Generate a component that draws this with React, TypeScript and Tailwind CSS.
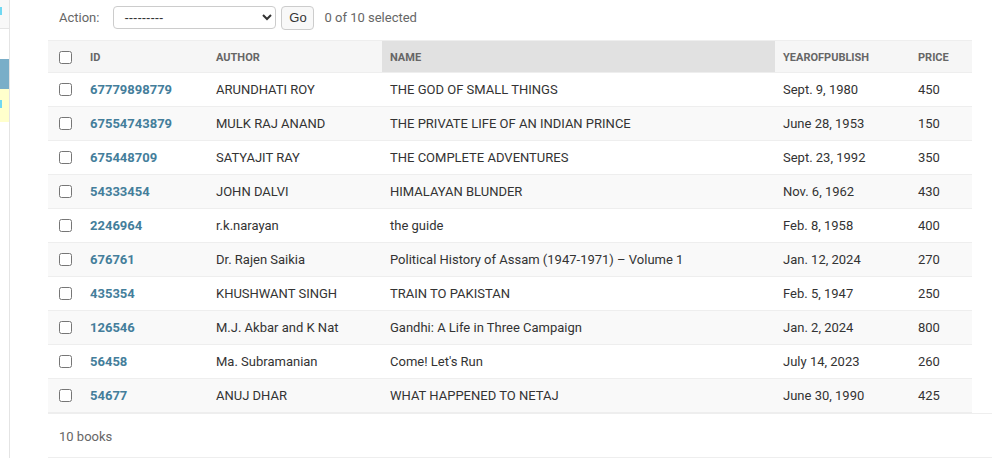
import React from 'react';

type Book = {
    id: string;
    author: string;
    name: string;
    year: string;
    price: string;
};

const books: Book[] = [
    { id: '67779898779', author: 'ARUNDHATI ROY', name: 'THE GOD OF SMALL THINGS', year: 'Sept. 9, 1980', price: '450' },
    { id: '67554743879', author: 'MULK RAJ ANAND', name: 'THE PRIVATE LIFE OF AN INDIAN PRINCE', year: 'June 28, 1953', price: '150' },
    { id: '675448709', author: 'SATYAJIT RAY', name: 'THE COMPLETE ADVENTURES', year: 'Sept. 23, 1992', price: '350' },
    { id: '54333454', author: 'JOHN DALVI', name: 'HIMALAYAN BLUNDER', year: 'Nov. 6, 1962', price: '430' },
    { id: '2246964', author: 'r.k.narayan', name: 'the guide', year: 'Feb. 8, 1958', price: '400' },
    { id: '676761', author: 'Dr. Rajen Saikia', name: 'Political History of Assam (1947-1971) – Volume 1', year: 'Jan. 12, 2024', price: '270' },
    { id: '435354', author: 'KHUSHWANT SINGH', name: 'TRAIN TO PAKISTAN', year: 'Feb. 5, 1947', price: '250' },
    { id: '126546', author: 'M.J. Akbar and K Nat', name: 'Gandhi: A Life in Three Campaign', year: 'Jan. 2, 2024', price: '800' },
    { id: '56458', author: 'Ma. Subramanian', name: "Come! Let's Run", year: 'July 14, 2023', price: '260' },
    { id: '54677', author: 'ANUJ DHAR', name: 'WHAT HAPPENED TO NETAJ', year: 'June 30, 1990', price: '425' },
];

function Sidebar() {
    // collapsed nav sidebar, only a sliver shows
    return (
        <div className="w-[10px] shrink-0 border-r border-[#e4e4e4] min-h-[458px] flex flex-col">
            <div className="h-[29px] bg-[#f8f8f8] border-b border-[#e4e4e4] pt-[7px]">
                <div className="w-[2px] h-[8px] bg-[#70d8f2]" />
            </div>
            <div className="h-[30px]" />
            <div className="h-[30px] bg-[#79aec8]" />
            <div className="h-[33px] bg-[#ffffcc] pt-[11px]">
                <div className="w-[2px] h-[8px] bg-[#70d8f2]" />
            </div>
        </div>
    );
}

function ActionBar() {
    return (
        <div className="flex items-center h-[23px] text-[13px] text-[#666]">
            <span className="ml-[11px] mr-[14px]">Action:</span>
            <select className="w-[163px] h-[23px] border border-[#ccc] rounded-[4px] bg-white text-[13px] text-[#333] pl-[6px] font-['Liberation_Sans',sans-serif]">
                <option>---------</option>
            </select>
            <button className="ml-[5px] h-[24px] w-[33px] border border-[#ccc] rounded-[4px] bg-[#f8f8f8] text-[#333] text-[13px] font-['Liberation_Sans',sans-serif]">
                Go
            </button>
            <span className="ml-[10px]">0 of 10 selected</span>
        </div>
    );
}

export default function App() {
    return (
        <div className="flex w-[1008px] h-[458px] overflow-hidden bg-white font-['Roboto',sans-serif]">
            <Sidebar />
            <div className="pl-[38px] w-[992px] pt-[6px]">
                <ActionBar />
                <div className="mt-[11px] w-[924px]">
                    <table className="table-fixed w-[924px] border-collapse border-t border-[#eee]">
                        <colgroup>
                            <col className="w-[34px]" />
                            <col className="w-[126px]" />
                            <col className="w-[174px]" />
                            <col className="w-[393px]" />
                            <col className="w-[135px]" />
                            <col className="w-[62px]" />
                        </colgroup>
                        <thead>
                            <tr className="h-[32px] bg-[#f6f6f6] border-b border-[#eee] text-[11px] font-bold uppercase text-[#666] text-left">
                                <th className="pl-[11px] pt-[1px]">
                                    <input type="checkbox" className="block m-0 w-[13px] h-[13px]" />
                                </th>
                                <th className="pl-[8px] pt-[3px]">ID</th>
                                <th className="pl-[8px] pt-[3px]">Author</th>
                                <th className="pl-[8px] pt-[3px] bg-[#e1e1e1]">Name</th>
                                <th className="pl-[8px] pt-[3px]">Yearofpublish</th>
                                <th className="pl-[8px] pt-[3px]">Price</th>
                            </tr>
                        </thead>
                        <tbody>
                            {books.map((b, i) => (
                                <tr
                                    key={b.id}
                                    className={
                                        'h-[34px] border-b border-[#eee] text-[13px] text-[#333] ' +
                                        (i % 2 === 1 ? 'bg-[#f9f9f9]' : 'bg-white')
                                    }
                                >
                                    <td className="pl-[11px]">
                                        <input type="checkbox" className="block m-0 w-[13px] h-[13px]" />
                                    </td>
                                    <td className="pl-[8px]">
                                        <a href="#" className="font-bold text-[#447e9b]">{b.id}</a>
                                    </td>
                                    <td className="pl-[8px] whitespace-nowrap overflow-hidden">{b.author}</td>
                                    <td className="pl-[8px] whitespace-nowrap overflow-hidden">{b.name}</td>
                                    <td className="pl-[8px]">{b.year}</td>
                                    <td className="pl-[8px]">{b.price}</td>
                                </tr>
                            ))}
                        </tbody>
                    </table>
                </div>
                <div className="w-[944px] h-[45px] pt-[2px] border-t border-b border-[#eee] flex items-center pl-[11px] text-[13px] text-[#666]">
                    10 books
                </div>
            </div>
        </div>
    );
}
